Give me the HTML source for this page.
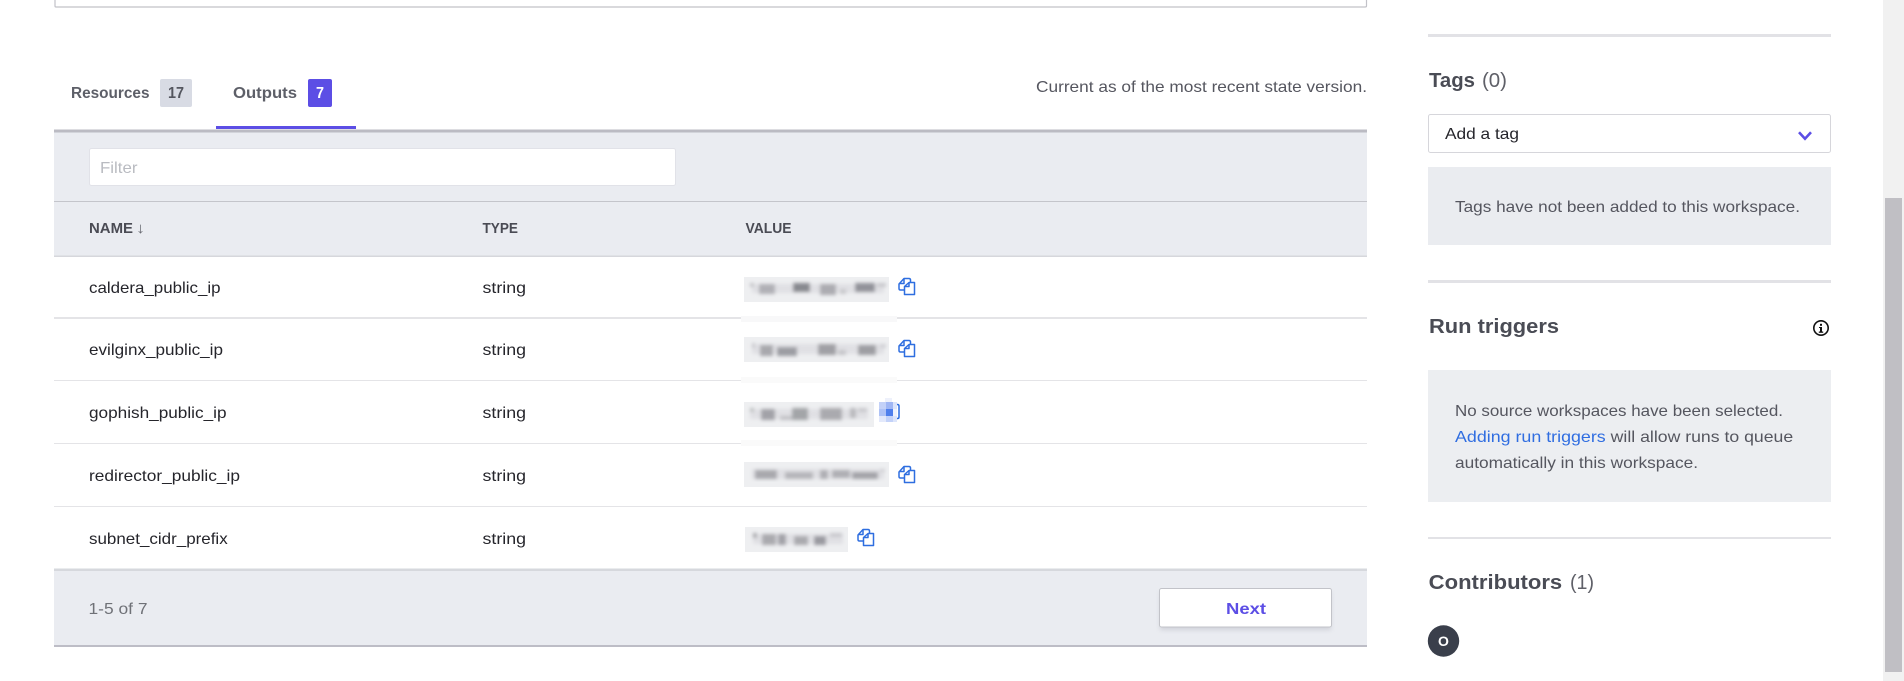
<!DOCTYPE html>
<html><head><meta charset="utf-8"><title>Outputs</title>
<style>
html,body{margin:0;padding:0;background:#fff;width:1904px;height:681px;overflow:hidden}
svg{display:block}
text{font-family:"Liberation Sans",sans-serif;font-size:16px}
.b{font-weight:700}
.h{font-weight:700;font-size:15px;fill:#4a4b54}
.n{fill:#25252b}
.p{fill:#55565f}
.t{font-weight:700;font-size:20px;fill:#4a4c55}
.c{font-size:20px;fill:#5f6068}
</style></head><body>
<svg width="1904" height="681" viewBox="0 0 1904 681" xmlns="http://www.w3.org/2000/svg">
<defs>
<filter id="bl" x="-5%" y="-30%" width="110%" height="160%"><feGaussianBlur stdDeviation="1.9"/></filter>
<filter id="s" x="-5%" y="-20%" width="110%" height="150%"><feGaussianBlur stdDeviation="2.500"/></filter>
<g id="cp" fill="none" stroke="#2e6ee0" stroke-width="1.5" stroke-linejoin="round">
<path d="M6 13H2.5Q1 13 1 11.5V7L6 1.5H11Q12.5 1.5 12.5 3V5"/>
<path d="M6 2V6.5H1.5"/>
<path d="M11 5.5H16.5V17.5H6.5V9.5Z"/>
<path d="M11 5.5V9.5H6.5"/>
</g>
</defs>

<!-- top card remnant -->
<path d="M55 0V6Q55 7 56 7H1365Q1366.500 7 1366.500 6V0" fill="none" stroke="#c2c2c8" stroke-width="1.200"/>

<!-- tabs -->
<text class="b" x="71" y="98" style="font-size:16px;fill:#5d5f68" textLength="78.500" lengthAdjust="spacingAndGlyphs">Resources</text>
<rect x="160" y="79" width="32" height="28" rx="2" fill="#d8dbe4"/>
<text class="b" x="168" y="98" style="font-size:16px;fill:#54565f" textLength="16" lengthAdjust="spacingAndGlyphs">17</text>
<text class="b" x="233" y="98" style="font-size:16px;fill:#5d5f68" textLength="64" lengthAdjust="spacingAndGlyphs">Outputs</text>
<rect x="308" y="79" width="24" height="28" rx="2" fill="#5c4ee5"/>
<text class="b" x="316" y="98" style="font-size:16px;fill:#fff" textLength="8" lengthAdjust="spacingAndGlyphs">7</text>
<text x="1036" y="92" class="p" textLength="331" lengthAdjust="spacingAndGlyphs">Current as of the most recent state version.</text>

<!-- filter bar + header -->
<rect x="54" y="132" width="1313" height="124" fill="#eaecf1"/>
<rect x="54" y="129.500" width="1313" height="3" fill="#bbbbc3"/>
<rect x="216" y="126" width="140" height="3" fill="#5c4ee5"/>
<rect x="89.500" y="148.500" width="586" height="37" rx="2" fill="#fff" stroke="#e1e2e8"/>
<text x="100" y="173" style="fill:#b9bbc1" textLength="37.500" lengthAdjust="spacingAndGlyphs">Filter</text>
<rect x="54" y="201" width="1313" height="1" fill="#c4c5cb"/>
<rect x="54" y="255.500" width="1313" height="1.500" fill="#d6d7dc"/>
<text class="h" x="89" y="233" textLength="44" lengthAdjust="spacingAndGlyphs">NAME</text>
<text class="h" x="136" y="233" style="font-weight:400;fill:#6a6b73" textLength="9" lengthAdjust="spacingAndGlyphs">↓</text>
<text class="h" x="482.500" y="233" textLength="35.500" lengthAdjust="spacingAndGlyphs">TYPE</text>
<text class="h" x="745.500" y="233" textLength="46" lengthAdjust="spacingAndGlyphs">VALUE</text>

<!-- row lines -->
<rect x="54" y="317" width="1313" height="2" fill="#e4e4e7"/>
<rect x="54" y="380" width="1313" height="1" fill="#e4e4e7"/>
<rect x="54" y="443" width="1313" height="1" fill="#e4e4e7"/>
<rect x="54" y="506" width="1313" height="1" fill="#e4e4e7"/>
<rect x="741" y="316" width="156" height="6" fill="#f8f8f9"/>
<rect x="741" y="377" width="156" height="6" fill="#fafafa"/>
<rect x="741" y="440" width="156" height="6" fill="#fafafa"/>

<!-- rows -->
<text class="n" x="89" y="293" textLength="131.500" lengthAdjust="spacingAndGlyphs">caldera_public_ip</text>
<text class="n" x="89" y="355" textLength="134" lengthAdjust="spacingAndGlyphs">evilginx_public_ip</text>
<text class="n" x="89" y="418" textLength="137.500" lengthAdjust="spacingAndGlyphs">gophish_public_ip</text>
<text class="n" x="89" y="481" textLength="151" lengthAdjust="spacingAndGlyphs">redirector_public_ip</text>
<text class="n" x="89" y="544" textLength="138.700" lengthAdjust="spacingAndGlyphs">subnet_cidr_prefix</text>
<text class="n" x="482.500" y="293" textLength="43.500" lengthAdjust="spacingAndGlyphs">string</text>
<text class="n" x="482.500" y="355" textLength="43.500" lengthAdjust="spacingAndGlyphs">string</text>
<text class="n" x="482.500" y="418" textLength="43.500" lengthAdjust="spacingAndGlyphs">string</text>
<text class="n" x="482.500" y="481" textLength="43.500" lengthAdjust="spacingAndGlyphs">string</text>
<text class="n" x="482.500" y="544" textLength="43.500" lengthAdjust="spacingAndGlyphs">string</text>

<!-- redacted values -->
<rect x="744" y="277" width="145" height="25" fill="#eeeff1"/>
<g filter="url(#bl)">
<rect x="752" y="284" width="132" height="9" fill="#e0e0e4"/>
<rect x="750" y="283" width="4" height="4" fill="#c4c4c8"/><rect x="759" y="284" width="16" height="10" fill="#b0b0b6"/><rect x="793" y="283" width="17" height="9" fill="#88898f"/><rect x="820" y="284" width="16" height="11" fill="#acacb1"/><rect x="840" y="289" width="6" height="5" fill="#c8c8cc"/><rect x="855" y="283" width="20" height="9" fill="#92939a"/><rect x="877" y="283" width="9" height="4" fill="#c8c8cc"/>
</g>
<rect x="744" y="337" width="145" height="25" fill="#eeeff1"/>
<g filter="url(#bl)">
<rect x="752" y="344" width="132" height="10" fill="#e0e0e4"/>
<rect x="752" y="343" width="3" height="5" fill="#c8c8cc"/><rect x="760" y="345" width="13" height="11" fill="#a8a8ad"/><rect x="777" y="347" width="20" height="9" fill="#9c9da3"/><rect x="818" y="344" width="18" height="11" fill="#a0a0a5"/><rect x="838" y="350" width="8" height="5" fill="#c5c5c9"/><rect x="858" y="345" width="18" height="10" fill="#9e9ea3"/><rect x="880" y="344" width="6" height="4" fill="#d0d0d4"/>
</g>
<rect x="744" y="402" width="130" height="25" fill="#eeeff1"/>
<g filter="url(#bl)">
<rect x="750" y="409" width="118" height="10" fill="#e0e0e4"/>
<rect x="750" y="408" width="4" height="4" fill="#bcbfc0"/><rect x="761" y="409" width="14" height="11" fill="#a2a2a8"/><rect x="780" y="416" width="12" height="4" fill="#c0c0c4"/><rect x="792" y="408" width="16" height="12" fill="#a3a5a8"/><rect x="820" y="408" width="22" height="12" fill="#aaaaaf"/><rect x="850" y="408" width="6" height="10" fill="#b9b9bd"/><rect x="858" y="408" width="9" height="4" fill="#c8c8cc"/>
</g>
<rect x="744" y="462" width="145" height="25" fill="#eeeff1"/>
<g filter="url(#bl)">
<rect x="752" y="469" width="132" height="10" fill="#e0e0e4"/>
<rect x="755" y="470" width="22" height="9" fill="#a8a8ad"/><rect x="785" y="472" width="28" height="7" fill="#b5b5ba"/><rect x="820" y="470" width="8" height="9" fill="#afafb4"/><rect x="832" y="470" width="18" height="8" fill="#afafb4"/><rect x="852" y="472" width="26" height="7" fill="#a3a3a8"/><rect x="880" y="469" width="5" height="3" fill="#cfcfd3"/>
</g>
<rect x="745" y="527" width="103" height="25" fill="#eeeff1"/>
<g filter="url(#bl)">
<rect x="753" y="534" width="90" height="10" fill="#e0e0e4"/>
<rect x="753" y="533" width="4" height="5" fill="#a8a8ac"/><rect x="762" y="534" width="14" height="11" fill="#aaaaaf"/><rect x="778" y="534" width="8" height="11" fill="#a2a2a8"/><rect x="794" y="536" width="14" height="9" fill="#aaaaaf"/><rect x="814" y="536" width="12" height="9" fill="#9a9aa0"/><rect x="830" y="533" width="12" height="4" fill="#c8c8cc"/>
</g>

<!-- copy icons -->
<use href="#cp" x="898" y="277"/>
<use href="#cp" x="898" y="339"/>
<use href="#cp" x="898" y="465"/>
<use href="#cp" x="857" y="528"/>
<!-- pixelated icon -->
<path d="M892 404.500H897.500Q899 404.500 899 406V417Q899 418.500 897.500 418.500H894" fill="none" stroke="#2e6ee0" stroke-width="1.500"/>
<rect x="885" y="398" width="7" height="4" fill="#eef1fb"/>
<rect x="879" y="402" width="7" height="7" fill="#c3d1f8"/><rect x="886" y="402" width="7" height="7" fill="#9fb6f4"/><rect x="893" y="402" width="4" height="7" fill="#dbe4fb"/>
<rect x="879" y="409" width="7" height="7" fill="#aec2f6"/><rect x="886" y="409" width="7" height="7" fill="#4f7fec"/><rect x="893" y="409" width="4" height="7" fill="#eef2fd"/>
<rect x="879" y="416" width="7" height="6" fill="#e3e9fb"/><rect x="886" y="416" width="7" height="6" fill="#c3d2f9"/><rect x="893" y="416" width="4" height="6" fill="#dce5fb"/>

<!-- footer -->
<rect x="54" y="570" width="1313" height="76" fill="#eaecf1"/>
<rect x="54" y="568.500" width="1313" height="2.500" fill="#d6d8dd"/>
<rect x="54" y="645" width="1313" height="2" fill="#bdbdc6"/>
<text x="88.500" y="614" style="fill:#6f7177" textLength="59" lengthAdjust="spacingAndGlyphs">1-5 of 7</text>
<rect x="1160" y="592" width="171" height="38" fill="#8f909c" opacity=".28" filter="url(#s)"/>
<rect x="1159.500" y="588.500" width="172" height="38.500" rx="2" fill="#fff" stroke="#c2c3c9"/>
<text class="b" x="1226" y="614" style="fill:#5c4ee5" textLength="40" lengthAdjust="spacingAndGlyphs">Next</text>

<!-- sidebar -->
<rect x="1428" y="34" width="403" height="3" fill="#e2e2e6"/>
<text class="t" x="1429" y="87" textLength="46" lengthAdjust="spacingAndGlyphs">Tags</text>
<text class="c" x="1482" y="87" textLength="25" lengthAdjust="spacingAndGlyphs">(0)</text>
<rect x="1428.500" y="114.500" width="402" height="38" rx="2" fill="#fff" stroke="#d6d6db"/>
<text x="1445" y="139" class="n" textLength="74" lengthAdjust="spacingAndGlyphs">Add a tag</text>
<path d="M1799 132.200L1805 138.700L1811 132.200" fill="none" stroke="#5c4ee5" stroke-width="2.600"/>
<rect x="1428" y="167" width="403" height="78" fill="#eaecf0"/>
<text x="1455" y="212" class="p" textLength="345" lengthAdjust="spacingAndGlyphs">Tags have not been added to this workspace.</text>
<rect x="1428" y="280" width="403" height="3" fill="#e2e2e6"/>
<text class="t" x="1429" y="333" textLength="130" lengthAdjust="spacingAndGlyphs">Run triggers</text>
<circle cx="1821" cy="328" r="7.200" fill="none" stroke="#111" stroke-width="1.600"/>
<rect x="1820" y="327" width="2" height="5" fill="#111"/><rect x="1818.800" y="331.500" width="4.400" height="1.300" fill="#111"/><rect x="1819" y="327" width="2" height="1" fill="#111"/>
<rect x="1820" y="323.800" width="2" height="2" fill="#111"/>
<rect x="1428" y="370" width="403" height="132" fill="#eceef1"/>
<text x="1455" y="416" class="p" textLength="328" lengthAdjust="spacingAndGlyphs">No source workspaces have been selected.</text>
<text x="1455" y="442" style="fill:#2f6de1" textLength="150.700" lengthAdjust="spacingAndGlyphs">Adding run triggers</text>
<text x="1610.700" y="442" class="p" textLength="182.500" lengthAdjust="spacingAndGlyphs">will allow runs to queue</text>
<text x="1455" y="468" class="p" textLength="243" lengthAdjust="spacingAndGlyphs">automatically in this workspace.</text>
<rect x="1428" y="537" width="403" height="2" fill="#e2e2e6"/>
<text class="t" x="1428.700" y="589" textLength="133.500" lengthAdjust="spacingAndGlyphs">Contributors</text>
<text class="c" x="1570" y="589" textLength="24" lengthAdjust="spacingAndGlyphs">(1)</text>
<circle cx="1443.500" cy="641" r="15.700" fill="#3a3f4b"/>
<text x="1443.500" y="646" text-anchor="middle" style="fill:#fff;font-weight:700;font-size:14px">O</text>

<!-- scrollbar -->
<rect x="1883" y="0" width="21" height="681" fill="#f1f1f1"/>
<rect x="1885" y="198" width="17" height="474" fill="#c0bfc4"/>
</svg>
</body></html>
